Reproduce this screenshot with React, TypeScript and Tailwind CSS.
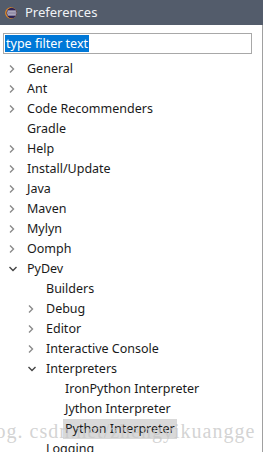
import React from 'react';

interface Node {
  label: string;
  level: number;
  arrow?: 'right' | 'down';
  selected?: boolean;
}

const nodes: Node[] = [
  { label: 'General', level: 0, arrow: 'right' },
  { label: 'Ant', level: 0, arrow: 'right' },
  { label: 'Code Recommenders', level: 0, arrow: 'right' },
  { label: 'Gradle', level: 0 },
  { label: 'Help', level: 0, arrow: 'right' },
  { label: 'Install/Update', level: 0, arrow: 'right' },
  { label: 'Java', level: 0, arrow: 'right' },
  { label: 'Maven', level: 0, arrow: 'right' },
  { label: 'Mylyn', level: 0, arrow: 'right' },
  { label: 'Oomph', level: 0, arrow: 'right' },
  { label: 'PyDev', level: 0, arrow: 'down' },
  { label: 'Builders', level: 1 },
  { label: 'Debug', level: 1, arrow: 'right' },
  { label: 'Editor', level: 1, arrow: 'right' },
  { label: 'Interactive Console', level: 1, arrow: 'right' },
  { label: 'Interpreters', level: 1, arrow: 'down' },
  { label: 'IronPython Interpreter', level: 2 },
  { label: 'Jython Interpreter', level: 2 },
  { label: 'Python Interpreter', level: 2, selected: true },
  { label: 'Logging', level: 1 },
];

const indent = ['pl-[8px]', 'pl-[27px]', 'pl-[46px]'];

const Arrow: React.FC<{ dir?: 'right' | 'down' }> = ({ dir }) => (
  <span className="w-[19px] h-[20px] flex items-center justify-start shrink-0">
    {dir === 'right' && (
      <svg width="8" height="10" viewBox="0 0 8 10">
        <path d="M2 1.5 L5.5 5 L2 8.5" fill="none" stroke="#8a8a8a" strokeWidth="1.4" />
      </svg>
    )}
    {dir === 'down' && (
      <svg width="10" height="8" viewBox="0 0 10 8">
        <path d="M1.5 2 L5 5.5 L8.5 2" fill="none" stroke="#444" strokeWidth="1.4" />
      </svg>
    )}
  </span>
);

const App: React.FC = () => {
  return (
    <div className="w-[263px] h-[452px] overflow-hidden relative bg-white font-['Noto_Sans','Liberation_Sans',sans-serif] text-[12.5px]">
      <div className="h-[25px] bg-[#535c6b] flex items-center pl-[5px] gap-[8px]">
        <svg width="12" height="12" viewBox="0 0 12 12">
          <circle cx="6" cy="6" r="5.8" fill="#f7941e" />
          <circle cx="6.6" cy="6" r="5.2" fill="#2c2255" />
          <rect x="2.5" y="3.6" width="8.4" height="1" fill="#fff" />
          <rect x="2" y="5.5" width="9.4" height="1" fill="#fff" />
          <rect x="2.5" y="7.4" width="8.4" height="1" fill="#fff" />
        </svg>
        <span className="text-[#f0f2f5] text-[13px]">Preferences</span>
      </div>
      <div className="border-r border-[#a0a0a0] h-[427px]">
        <div className="pt-[8px] pl-[3px] pr-[10px]">
          <div className="h-[21px] border border-[#a8a8a8] flex items-center pl-[1px]">
            <span className="bg-[#0078d7] text-white leading-[17px] h-[17px] px-[1px] text-[12.5px]">type filter text</span>
          </div>
        </div>
        <div className="pt-[5px]">
          {nodes.map((n) => (
            <div key={n.label} className={`flex items-center h-[20px] ${indent[n.level]}`}>
              <Arrow dir={n.arrow} />
              <span className={`leading-[20px] px-[2px] -ml-[2px] text-[#1a1a1a] ${n.selected ? 'bg-[#d9d9d9]' : ''}`}>{n.label}</span>
            </div>
          ))}
        </div>
      </div>
      <div className="absolute left-[-22px] top-[416px] text-[20px] text-[#c8c8c8]/80 font-['Liberation_Serif',serif] tracking-[1px] whitespace-nowrap pointer-events-none">
        blog. csdn.net/zhengyikuangge
      </div>
    </div>
  );
};

export default App;
